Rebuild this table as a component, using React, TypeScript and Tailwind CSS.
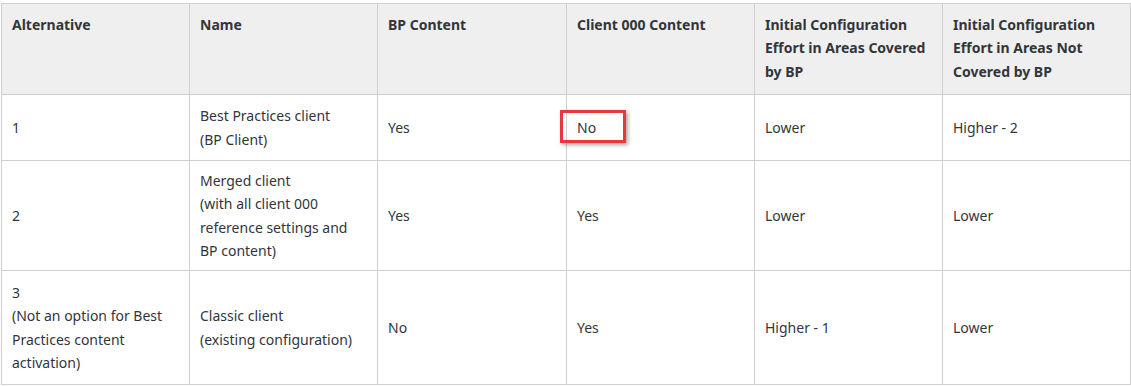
import React from 'react';

type Row = {
  alt: React.ReactNode;
  name: React.ReactNode;
  bp: string;
  client: string;
  covered: string;
  notCovered: string;
  h: string;
  highlight?: boolean;
};

const rows: Row[] = [
  {
    alt: '1',
    name: (
      <>
        Best Practices client
        <br />
        (BP Client)
      </>
    ),
    bp: 'Yes',
    client: 'No',
    covered: 'Lower',
    notCovered: 'Higher - 2',
    h: 'h-[66px]',
    highlight: true,
  },
  {
    alt: '2',
    name: (
      <>
        Merged client
        <br />
        (with all client 000 reference settings and BP content)
      </>
    ),
    bp: 'Yes',
    client: 'Yes',
    covered: 'Lower',
    notCovered: 'Lower',
    h: 'h-[110px]',
  },
  {
    alt: (
      <>
        3
        <br />
        (Not an option for Best Practices content activation)
      </>
    ),
    name: (
      <>
        Classic client
        <br />
        (existing configuration)
      </>
    ),
    bp: 'No',
    client: 'Yes',
    covered: 'Higher - 1',
    notCovered: 'Lower',
    h: 'h-[114px]',
  },
];

const headers = [
  'Alternative',
  'Name',
  'BP Content',
  'Client 000 Content',
  'Initial Configuration Effort in Areas Covered by BP',
  'Initial Configuration Effort in Areas Not Covered by BP',
];

const td = 'border border-[#cfcfcf] px-[10px] py-[7px] align-middle';

export default function App() {
  return (
    <div
      className="bg-white w-[1131px] h-[386px] pt-[3px] pl-px text-[14px] leading-[23.3px] text-[#32363a]"
      style={{ fontFamily: '"Noto Sans", Arial, sans-serif' }}
    >
      <table className="table-fixed border-collapse w-[1129px]">
        <colgroup>
          <col className="w-[188px]" />
          <col className="w-[188px]" />
          <col className="w-[189px]" />
          <col className="w-[188px]" />
          <col className="w-[188px]" />
          <col className="w-[188px]" />
        </colgroup>
        <thead>
          <tr className="h-[91px] bg-[#efefef]">
            {headers.map((h) => (
              <th
                key={h}
                className="border border-[#cfcfcf] px-[10px] pt-[9px] pb-[8px] text-left align-top font-bold"
              >
                {h}
              </th>
            ))}
          </tr>
        </thead>
        <tbody>
          {rows.map((r, i) => (
            <tr key={i} className={r.h}>
              <td className={td}>{r.alt}</td>
              <td className={td}>{r.name}</td>
              <td className={td}>{r.bp}</td>
              <td className={td + ' relative'}>
                {r.client}
                {r.highlight && (
                  <span className="absolute left-[-7px] top-[15px] w-[66px] h-[33px] border-[3px] border-[#e8383d] shadow-[2px_2px_4px_rgba(0,0,0,0.35)]" />
                )}
              </td>
              <td className={td}>{r.covered}</td>
              <td className={td}>{r.notCovered}</td>
            </tr>
          ))}
        </tbody>
      </table>
    </div>
  );
}
